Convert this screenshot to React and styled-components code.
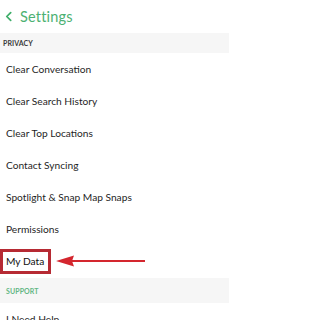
import React from "react";
import styled, { createGlobalStyle } from "styled-components";

const GlobalStyle = createGlobalStyle`
  html, body {
    margin: 0;
    padding: 0;
    background: #ffffff;
  }
  body {
    font-family: Lato, "Open Sans", "Liberation Sans", sans-serif;
    -webkit-font-smoothing: antialiased;
  }
`;

const privacyItems = [
  "Clear Conversation",
  "Clear Search History",
  "Clear Top Locations",
  "Contact Syncing",
  "Spotlight & Snap Map Snaps",
  "Permissions",
];

const App = () => {
  return (
    <>
      <GlobalStyle />
      <Screen>
        <Header>
          <BackIcon viewBox="0 0 8 12">
            <path d="M6.5 1.5 L2 6 L6.5 10.5" />
          </BackIcon>
          <Title>Settings</Title>
        </Header>

        <Section>PRIVACY</Section>
        {privacyItems.map((item) => (
          <Row key={item}>{item}</Row>
        ))}
        <Row>
          <Highlight>My Data</Highlight>
          <Arrow viewBox="0 0 90 12">
            <path d="M0 6 L18 0.5 L16 6 L18 11.5 Z" />
            <rect x="16" y="5" width="73" height="2" />
          </Arrow>
        </Row>

        <Section $green $tall>SUPPORT</Section>
        <Row>I Need Help</Row>
      </Screen>
    </>
  );
};

export default App;

const Screen = styled.div`
  width: 229px;
  height: 320px;
  overflow: hidden;
  background: #ffffff;
`;

const Header = styled.div`
  height: 33px;
  display: flex;
  align-items: center;
  padding-left: 5px;
  box-sizing: border-box;
`;

const BackIcon = styled.svg`
  width: 7px;
  height: 11px;
  margin-right: 8px;
  fill: none;
  stroke: #3fae6a;
  stroke-width: 2;
  stroke-linecap: round;
  stroke-linejoin: round;
`;

const Title = styled.div`
  font-size: 14.5px;
  color: #4cb172;
  letter-spacing: 0.2px;
  margin-top: -1px;
`;

const Section = styled.div`
  height: ${(p) => (p.$tall ? "25px" : "20px")};
  background: #f6f6f6;
  display: flex;
  align-items: center;
  padding-left: ${(p) => (p.$green ? "6px" : "3px")};
  font-size: 7px;
  font-weight: 700;
  color: ${(p) => (p.$green ? "#63b784" : "#3a3a3a")};
  letter-spacing: 0.1px;
  margin-top: ${(p) => (p.$tall ? "1px" : "0")};
`;

const Row = styled.div`
  height: 32px;
  display: flex;
  align-items: center;
  padding-left: 6px;
  font-size: 10.2px;
  color: #1f1f1f;
`;

const Highlight = styled.span`
  margin-left: -6px;
  height: 25px;
  display: flex;
  align-items: center;
  padding: 0 4px 0 3px;
  border: 3px solid #b62a33;
  box-sizing: border-box;
  color: #111111;
`;

const Arrow = styled.svg`
  width: 90px;
  height: 12px;
  margin-left: 5px;
  fill: #d4262e;
`;
